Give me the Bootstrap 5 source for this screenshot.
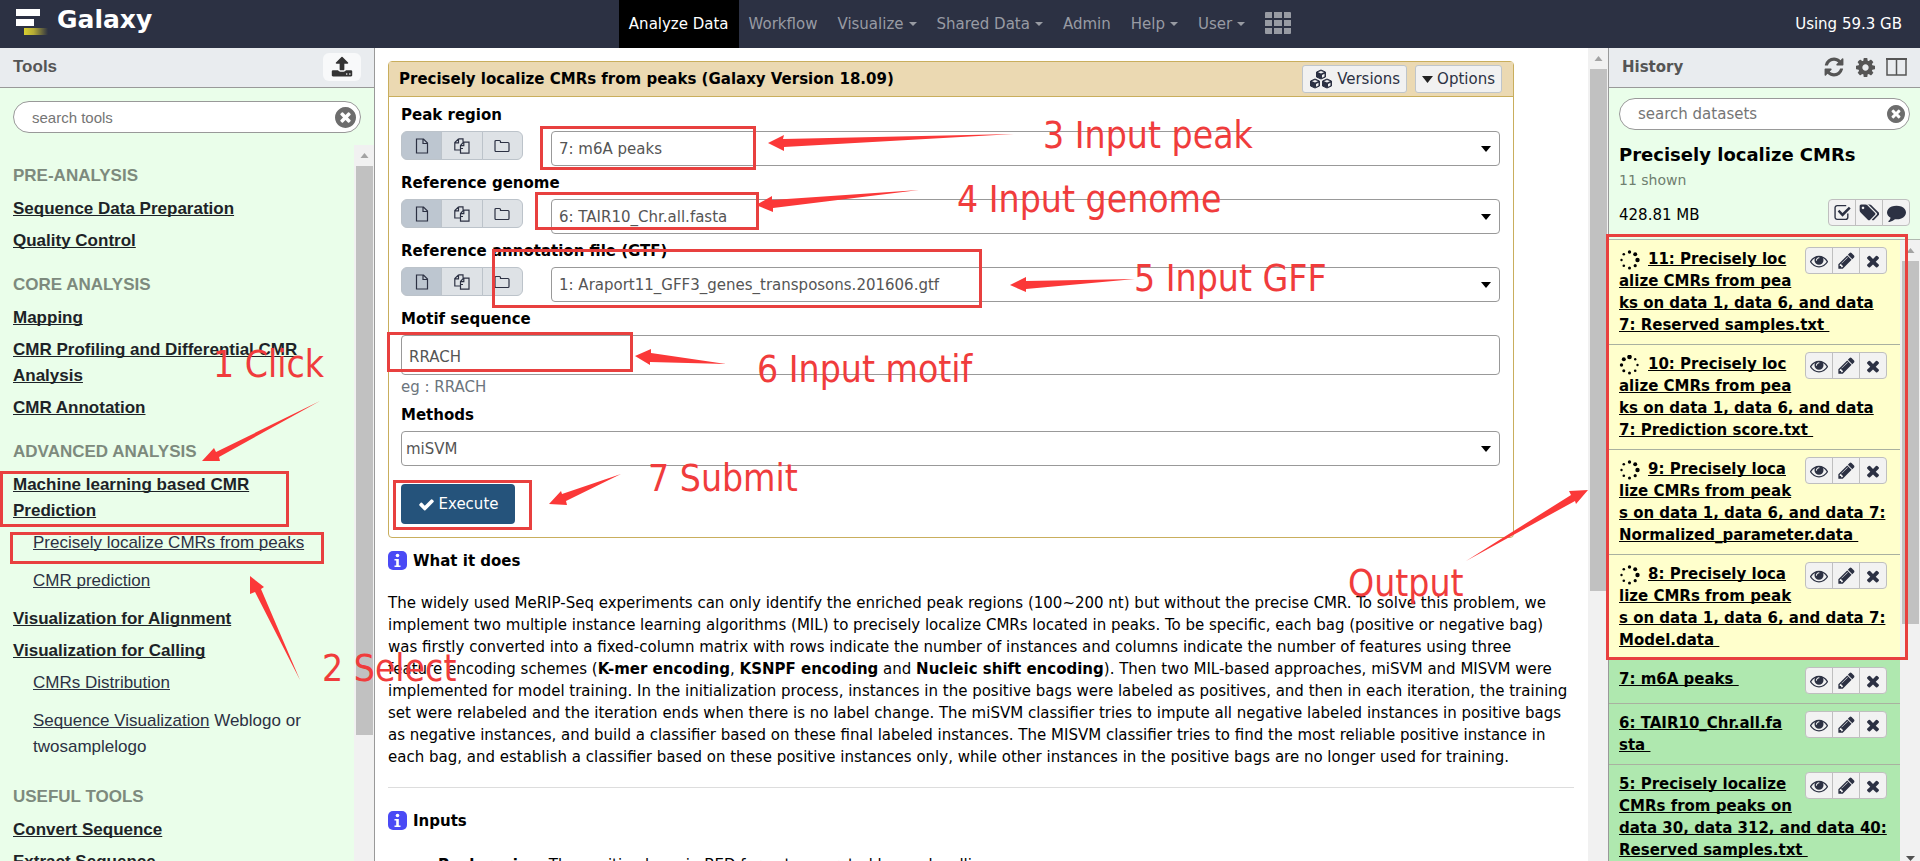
<!DOCTYPE html>
<html lang="en">
<head>
<meta charset="utf-8">
<meta name="viewport" content="width=device-width, initial-scale=1">
<title>Galaxy</title>
<link rel="stylesheet" href="https://cdn.jsdelivr.net/npm/bootstrap@5.3.0/dist/css/bootstrap.min.css">
<style>
  body { font: 15px/22px Verdana, "DejaVu Sans", sans-serif; color: #000; }
  a { color: inherit; text-decoration-skip-ink: none; }
  .masthead { height: 48px; background: #2c3143; color: #fff; }
  .brand-name { font-size: 25px; line-height: 40px; padding-left: 7px; }
  .main-nav { margin-left: 18px; }
  .masthead .nav-link { color: #989ba3; padding: 0 10px; line-height: 48px; height: 48px; }
  .masthead .nav-link.active { background: #000; color: #fff; }
  .masthead .nav-link svg { margin-top: -4px; }
  .masthead .dropdown-toggle::after { margin-left: 5px; vertical-align: 3px; border-width: 4px 4px 0; }
  .usage { line-height: 48px; padding-right: 18px; }
  .tools-panel { width: 375px; background: #eafeea; border-right: 1px solid #999; font-family: "Liberation Sans", Arial, sans-serif; font-size: 17px; line-height: 26px; color: #2c3143; }
  .history-panel { width: 312px; background: #eafeea; border-left: 1px solid #999; }
  .panel-head { height: 40px; background: #e9ecef; border-bottom: 1px solid #999; color: #555; padding: 0 13px 2px; }
  .panel-head .btn { color: #333; border: 0; }
  .head-icons { gap: 11px; }
  .upload-btn { background: #f8f9fa; width: 38px; height: 28px; padding: 2px; }
  .search-box { border: 1px solid #999; border-radius: 16px; height: 32px; background: #fff; }
  .tools-search { margin: 13px 13px 12px; }
  .search-box input { border: 0; background: none; outline: 0; height: 30px; min-width: 0; }
  .search-box input::placeholder { color: #757575; opacity: 1; }
  .search-box button { border: 0; background: none; padding: 0; color: #6d6d6d; line-height: 0; }
  .tool-list { padding: 18px 8px 0 13px; }
  .tool-list h2 { font-size: 17px; line-height: 26px; font-weight: bold; color: #7d8a7d; margin: 12px 0 7px; }
  .tool-list h2:first-child { margin-top: 0; }
  .tool-cat { font-weight: bold; margin-bottom: 6px; color: #1d2327; }
  .tool-item { margin: 0 0 12px 20px; }
  .track { width: 20px; background: #f1f1f1; color: #a3a3a3; }
  .track .cap { height: 21px; line-height: 0; }
  .thumb { width: 17px; background: #c1c1c1; }
  .center-body { padding: 13px 14px 0 13px; }
  .tool-card { border: 1px solid #c9ae5d; border-radius: 4px; margin-right: 60px; height: 477px; }
  .tool-head { background: #ebd9b2; border-bottom: 1px solid #c9ae5d; height: 35px; padding: 0 11px 0 10px; }
  .tool-head .btn { background: #f1f1f1; border: 1px solid #bfc5ca; border-radius: 3px; height: 28px; padding: 0 6px; font-size: 15px; line-height: 24px; color: #2c3143; }
  .tool-form { padding: 7px 13px 0 12px; }
  .tool-form label { font-weight: bold; display: block; line-height: 22px; margin-bottom: 5px; }
  .src-group { width: 122px; margin-right: 28px; height: 29px; }
  .src-group .btn { background: #dee2e6; border-color: #bcc3ca; color: #2c3143; padding: 0; line-height: 0; }
  .src-group .btn.active { background: #bdc6d0; border-color: #bcc3ca; }
  .field { border: 1px solid #999; border-radius: 4px; height: 35px; width: 100%; padding: 0 7px; color: #555; background: #fff; font-size: 15px; }
  .field-row { margin-bottom: 6px; }
  select.field { appearance: none; background: #fff url("data:image/svg+xml,%3Csvg xmlns='http://www.w3.org/2000/svg' width='10' height='6'%3E%3Cpath d='M0 0h10L5 6z'/%3E%3C/svg%3E") no-repeat right 8px center; }
  select#method { padding-left: 4px; }
  .motif { height: 40px; padding-top: 3px; }
  .hint { color: #6c757d; line-height: 22px; margin: 1px 0 6px; }
  .run-btn { background: #25537b; color: #fff; border: 0; border-radius: 4px; width: 114px; height: 40px; font-size: 15px; padding: 0; margin-top: 18px; }
  .help h3 { font-size: 15px; line-height: 22px; font-weight: bold; margin: 12px 0 20px; gap: 5px; }
  .help p { margin: 0; }
  .help hr { margin: 19px 0 22px; border-color: #ddd; opacity: 1; }
  .help ul { list-style: none; padding: 2px 0 0 50px; margin: 0; }
  .hist-top { padding: 10px 10px 0 10px; height: 151px; }
  .hist-name { font-size: 18px; line-height: 24px; font-weight: bold; margin: 13px 0 2px; }
  .hist-shown { font-size: 14px; color: #6f7f6f; line-height: 22px; }
  .hist-list { border-top: 1px solid #b0b8b0; }
  .hist-item { padding: 8px 13px 8px 10px; border-bottom: 1px solid #a9b1a0; font-weight: bold; min-height: 44px; line-height: 22px; white-space: nowrap; }
  .hist-item .btn-group { float: right; margin: -1px 0 4px 4px; }
  .running { background: #ffffcc; }
  .done { background: #afe8af; }
  .mini .btn { width: 28px; height: 27px; padding: 0; line-height: 0; background: #f2f2f2; border: 1px solid #bfbfbf; color: #2c3143; border-radius: 4px; }
  .notes { left: 0; top: 0; pointer-events: none; z-index: 5; font-family: Tahoma, "DejaVu Sans Condensed", "Noto Sans", sans-serif; font-size: 37px; }
</style>
</head>
<body class="vh-100 d-flex flex-column overflow-hidden position-relative">

<svg width="0" height="0" class="position-absolute" aria-hidden="true">
  <symbol id="i-cog" viewBox="0 128 1536 1536"><path d="M1024 896q0-106-75-181t-181-75-181 75-75 181 75 181 181 75 181-75 75-181zm512-109v222q0 12-8 23t-20 13l-185 28q-19 54-39 91 35 50 107 138 10 12 10 25t-9 23q-27 37-99 108t-94 71q-12 0-26-9l-138-108q-44 23-91 38-16 136-29 186-7 28-36 28h-222q-14 0-24.500-8.500t-11.500-21.500l-28-184q-49-16-90-37l-141 107q-10 9-25 9-14 0-25-11-126-114-165-168-7-10-7-23 0-12 8-23 15-21 51-66.500t54-70.500q-27-50-41-99l-183-27q-13-2-21-12.500t-8-23.500v-222q0-12 8-23t19-13l186-28q14-46 39-92-40-57-107-138-10-12-10-24 0-10 9-23 26-36 98.500-107.500t94.500-71.500q13 0 26 10l138 107q44-23 91-38 16-136 29-186 7-28 36-28h222q14 0 24.500 8.500t11.500 21.500l28 184q49 16 90 37l142-107q9-9 24-9 13 0 25 10 129 119 165 170 7 8 7 22 0 12-8 23-15 21-51 66.500t-54 70.500q26 50 41 98l183 28q13 2 21 12.500t8 23.500z"/></symbol>
  <symbol id="i-x" viewBox="0 0 1792 1792"><path d="M1490 1322q0 40-28 68l-136 136q-28 28-68 28t-68-28l-294-294-294 294q-28 28-68 28t-68-28l-136-136q-28-28-28-68t28-68l294-294-294-294q-28-28-28-68t28-68l136-136q28-28 68-28t68 28l294 294 294-294q28-28 68-28t68 28l136 136q28 28 28 68t-28 68l-294 294 294 294q28 28 28 68z"/></symbol>
  <symbol id="i-refresh" viewBox="0 0 1792 1792"><path d="M1639 1056q0 5-1 7-64 268-268 434.500t-478 166.500q-146 0-282.500-55t-243.500-157l-129 129q-19 19-45 19t-45-19-19-45v-448q0-26 19-45t45-19h448q26 0 45 19t19 45-19 45l-137 137q71 66 161 102t187 36q134 0 250-65t186-179q11-17 53-117 8-23 30-23h192q13 0 22.500 9.500t9.500 22.500zm25-800v448q0 26-19 45t-45 19h-448q-26 0-45-19t-19-45 19-45l138-138q-148-137-349-137-134 0-250 65t-186 179q-11 17-53 117-8 23-30 23h-199q-13 0-22.500-9.500t-9.500-22.500v-7q65-268 270-434.500t480-166.500q146 0 284 55.500t245 156.500l130-129q19-19 45-19t45 19 19 45z"/></symbol>
  <symbol id="i-eye" viewBox="0 0 1792 1792"><path d="M1664 960q-152-236-381-353 61 104 61 225 0 185-131.500 316.500t-316.500 131.500-316.500-131.500-131.500-316.500q0-121 61-225-229 117-381 353 133 205 333.500 326.500t434.500 121.500 434.500-121.500 333.500-326.500zm-720-384q0-20-14-34t-34-14q-125 0-214.500 89.500t-89.500 214.500q0 20 14 34t34 14 34-14 14-34q0-86 61-147t147-61q20 0 34-14t14-34zm848 384q0 34-20 69-140 230-376.500 368.500t-499.500 138.500-499.500-139-376.500-368q-20-35-20-69t20-69q140-229 376.500-368t499.500-139 499.500 139 376.500 368q20 35 20 69z"/></symbol>
  <symbol id="i-pencil" viewBox="0 0 1792 1792"><path d="M491 1536l91-91-235-235-91 91v107h128v128h107zm523-928q0-22-22-22-10 0-17 7l-542 542q-7 7-7 17 0 22 22 22 10 0 17-7l542-542q7-7 7-17zm-54-192l416 416-832 832h-416v-416zm683 96q0 53-37 90l-166 166-416-416 166-165q36-38 90-38 53 0 91 38l235 234q37 39 37 91z"/></symbol>
  <symbol id="i-upload" viewBox="0 0 1792 1792"><path d="M1344 1472q0-26-19-45t-45-19-45 19-19 45 19 45 45 19 45-19 19-45zm256 0q0-26-19-45t-45-19-45 19-19 45 19 45 45 19 45-19 19-45zm128-224v320q0 40-28 68t-68 28h-1472q-40 0-68-28t-28-68v-320q0-40 28-68t68-28h427q21 56 70.500 92t110.500 36h256q61 0 110.500-36t70.500-92h427q40 0 68 28t28 68zm-325-648q-17 40-59 40h-256v448q0 26-19 45t-45 19h-256q-26 0-45-19t-19-45v-448h-256q-42 0-59-40-17-39 14-69l448-448q18-19 45-19t45 19l448 448q31 30 14 69z"/></symbol>
  <symbol id="i-clear" viewBox="128 128 1536 1536"><path d="M1277 1122q0-26-19-45l-181-181 181-181q19-19 19-45 0-27-19-46l-90-90q-19-19-46-19-26 0-45 19l-181 181-181-181q-19-19-45-19-27 0-46 19l-90 90q-19 19-19 46 0 26 19 45l181 181-181 181q-19 19-19 45 0 27 19 46l90 90q19 19 46 19 26 0 45-19l181-181 181 181q19 19 45 19 27 0 46-19l90-90q19-19 19-46zm387-226q0 209-103 385.500t-279.500 279.500-385.500 103-385.500-103-279.500-279.500-103-385.500 103-385.500 279.500-279.500 385.500-103 385.500 103 279.500 279.500 103 385.500z"/></symbol>
  <symbol id="i-check" viewBox="0 0 1792 1792"><path d="M1671 566q0 40-28 68l-724 724-136 136q-28 28-68 28t-68-28l-136-136-362-362q-28-28-28-68t28-68l136-136q28-28 68-28t68 28l294 295 656-657q28-28 68-28t68 28l136 136q28 28 28 68z"/></symbol>
  <symbol id="i-tags" viewBox="0 0 1920 1792"><path d="M512 448q0-53-37.500-90.500t-90.500-37.500-90.500 37.500-37.500 90.500 37.500 90.500 90.500 37.500 90.500-37.500 37.500-90.500zm1067 576q0 53-37 90l-491 492q-39 37-91 37-53 0-90-37l-715-716q-38-37-64.500-101t-26.500-117v-416q0-52 38-90t90-38h416q53 0 117 26.500t102 64.500l715 714q37 39 37 91zm384 0q0 53-37 90l-491 492q-39 37-91 37-36 0-59-14t-53-45l470-470q37-37 37-90 0-52-37-91l-715-714q-38-38-102-64.500t-117-26.500h224q53 0 117 26.500t102 64.500l715 714q37 39 37 91z"/></symbol>
  <symbol id="i-comment" viewBox="0 0 1792 1792"><path d="M1792 896q0 174-120 321.500t-326 233-450 85.500q-70 0-145-8-198 175-460 242-49 14-114 22-17 2-30.500-9t-17.500-29v-1q-3-4-.5-12t2-10 4.500-9.500l6-9 7-8.500 8-9q7-8 31-34.500t34.500-38 31-39.500 32.500-51 27-59 26-76q-157-89-247.500-220t-90.500-281q0-174 120-321.500t326-233 450-85.500 450 85.500 326 233 120 321.500z"/></symbol>
  <symbol id="i-checkbox" viewBox="0 0 16 16"><path d="M13 9v3.500a2 2 0 0 1-2 2H3a2 2 0 0 1-2-2v-9a2 2 0 0 1 2-2h8.500" fill="none" stroke="currentColor" stroke-width="1.300"/><path d="M3.500 7l1.500-1.500 3 3L14 2.500 15.700 4.200 8 12z"/></symbol>
  <symbol id="i-file" viewBox="0 0 16 16"><path d="M2.500 1h7l4 4v10h-11zM9 1v4.500h4.500" fill="none" stroke="currentColor" stroke-width="1.200"/></symbol>
  <symbol id="i-files" viewBox="0 0 16 16"><path d="M4.500.8H9v3M4.500.8L.8 4.500V12H6M4.500.8v4H.8M9.500 4.200H15v11H6.500V7.500zM9.800 4.200v3.500H6.500M9 10.500H6.500" fill="none" stroke="currentColor" stroke-width="1.200"/></symbol>
  <symbol id="i-folder" viewBox="0 0 16 16"><path d="M1 3.500a1 1 0 0 1 1-1h3.500a1 1 0 0 1 1 1v1H14a1 1 0 0 1 1 1v7a1 1 0 0 1-1 1H2a1 1 0 0 1-1-1z" fill="none" stroke="currentColor" stroke-width="1.200"/></symbol>
  <symbol id="i-cubes" viewBox="0 0 24 20"><g fill="currentColor" stroke="currentColor" stroke-linejoin="round"><path d="M12 1l4.500 2v5L12 10 7.500 8V3zM6 10l4.500 2v5L6 19l-4.500-2v-5zM18 10l4.500 2v5L18 19l-4.500-2v-5z"/></g><path d="M12 2l3 1.300-3 1.300-3-1.300zM6 11l3 1.300-3 1.300-3-1.300zM18 11l3 1.300-3 1.300-3-1.300zM13 6l2.500-1.200v2.700L13 8.700zM7 15l2.500-1.200v2.700L7 17.700zM19 15l2.500-1.200v2.700L19 17.700z" fill="#f1f1f1"/></symbol>
  <symbol id="i-columns" viewBox="0 0 21 18"><path d="M1 1h19v16H1zM10.500 2v15" fill="none" stroke="currentColor" stroke-width="1.500"/><path d="M0 0h21v2H0z"/></symbol>
  <symbol id="i-info" viewBox="0 0 20 20"><rect width="19" height="19" rx="5" fill="#4a4af5"/><circle cx="9.500" cy="4.500" r="1.800" fill="#fff"/><path d="M6.500 8h4.300v6.500h1.700V16h-6v-1.500h1.700v-5H6.500z" fill="#fff"/></symbol>
  <symbol id="i-up" viewBox="0 0 8 5"><path d="M0 5h8L4 0z"/></symbol>
  <symbol id="i-spin" viewBox="0 0 20 20"><circle cx="10" cy="2" r="1.700"/><circle cx="15.700" cy="4.300" r="2"/><circle cx="18" cy="10" r="2.200"/><circle cx="15.700" cy="15.700" r="1.600"/><circle cx="10" cy="18" r="1.500"/><circle cx="4.300" cy="15.700" r="1.300"/><circle cx="2" cy="10" r="1.200"/><circle cx="4.300" cy="4.300" r="1.300"/></symbol>
  <symbol id="i-spin2" viewBox="0 0 20 20"><circle cx="10" cy="2" r="2.300"/><circle cx="15.700" cy="4.300" r="1.200"/><circle cx="18" cy="10" r="1.200"/><circle cx="15.700" cy="15.700" r="1.300"/><circle cx="10" cy="18" r="1.500"/><circle cx="4.300" cy="15.700" r="1.500"/><circle cx="2" cy="10" r="1.700"/><circle cx="4.300" cy="4.300" r="2"/></symbol>
</svg>

<header class="masthead d-flex flex-shrink-0">
  <div class="col d-flex align-items-start">
    <svg class="ms-3 mt-2" width="34" height="28" viewBox="0 0 34 28"><defs><linearGradient id="gold"><stop offset="0" stop-color="#d8cf2f"/><stop offset=".4" stop-color="#b5ab35"/><stop offset="1" stop-color="#2c3143"/></linearGradient></defs><path d="M0 1h24v7H0zM0 11h18v7H0z" fill="#fff"/><path d="M8 20h24v7H8z" fill="url(#gold)"/></svg>
    <span class="brand-name fw-bold">Galaxy</span>
  </div>
  <nav class="nav main-nav flex-nowrap">
    <a class="nav-link active" href="#">Analyze Data</a>
    <a class="nav-link" href="#">Workflow</a>
    <a class="nav-link dropdown-toggle" href="#">Visualize</a>
    <a class="nav-link dropdown-toggle" href="#">Shared Data</a>
    <a class="nav-link" href="#">Admin</a>
    <a class="nav-link dropdown-toggle" href="#">Help</a>
    <a class="nav-link dropdown-toggle" href="#">User</a>
    <a class="nav-link" href="#" aria-label="Apps"><svg width="26" height="22" viewBox="0 0 26 22" fill="currentColor"><path d="M0 1q0-1 1-1h6v6H0zM9 0h8v6H9zM19 0h6q1 0 1 1v5h-7zM0 8h7v6H0zM9 8h8v6H9zM19 8h7v6h-7zM0 16h7v6H1q-1 0-1-1zM9 16h8v6H9zM19 16h7v5q0 1-1 1h-6z"/></svg></a>
  </nav>
  <div class="col text-end usage">Using 59.3 GB</div>
</header>

<div class="d-flex flex-grow-1 overflow-hidden">
  <aside class="tools-panel flex-shrink-0 d-flex flex-column">
    <div class="panel-head flex-shrink-0 d-flex align-items-center justify-content-between">
      <span class="fw-bold">Tools</span>
      <button class="btn upload-btn" aria-label="Upload"><svg width="22" height="22" fill="currentColor"><use href="#i-upload"/></svg></button>
    </div>
    <div class="search-box tools-search d-flex align-items-center flex-shrink-0 ps-3 pe-1">
      <input class="flex-grow-1" style="font-size:15px" type="text" placeholder="search tools" aria-label="search tools">
      <button aria-label="Clear"><svg width="21" height="21" fill="currentColor"><use href="#i-clear"/></svg></button>
    </div>
    <div class="d-flex flex-grow-1 overflow-hidden">
      <div class="tool-list flex-grow-1 d-flex flex-column">
        <h2>PRE-ANALYSIS</h2>
        <div class="tool-cat"><a href="#">Sequence Data Preparation</a></div>
        <div class="tool-cat"><a href="#">Quality Control</a></div>
        <h2>CORE ANALYSIS</h2>
        <div class="tool-cat"><a href="#">Mapping</a></div>
        <div class="tool-cat"><a href="#">CMR Profiling and Differential CMR Analysis</a></div>
        <div class="tool-cat"><a href="#">CMR Annotation</a></div>
        <h2>ADVANCED ANALYSIS</h2>
        <div class="tool-cat"><a href="#">Machine learning based CMR<br>Prediction</a></div>
        <div class="tool-item"><a href="#">Precisely localize CMRs from peaks</a></div>
        <div class="tool-item"><a href="#">CMR prediction</a></div>
        <div class="tool-cat"><a href="#">Visualization for Alignment</a></div>
        <div class="tool-cat"><a href="#">Visualization for Calling</a></div>
        <div class="tool-item"><a href="#">CMRs Distribution</a></div>
        <div class="tool-item"><a href="#">Sequence Visualization</a> Weblogo or twosamplelogo</div>
        <h2>USEFUL TOOLS</h2>
        <div class="tool-cat"><a href="#">Convert Sequence</a></div>
        <div class="tool-cat"><a href="#">Extract Sequence</a></div>
      </div>
      <div class="track flex-shrink-0 d-flex flex-column align-items-center">
        <div class="cap d-flex align-items-center"><svg width="9" height="5" fill="currentColor"><use href="#i-up"/></svg></div>
        <div class="thumb" style="height:79.5%"></div>
      </div>
    </div>
  </aside>

  <main class="flex-grow-1 d-flex overflow-hidden bg-white">
    <div class="center-body flex-grow-1">
      <div class="tool-card">
        <div class="tool-head d-flex align-items-center">
          <span class="fw-bold me-auto">Precisely localize CMRs from peaks (Galaxy Version 18.09)</span>
          <button class="btn d-flex align-items-center gap-1 me-2"><svg width="24" height="20"><use href="#i-cubes"/></svg>Versions</button>
          <button class="btn d-flex align-items-center gap-1"><svg width="11" height="7"><path d="M0 0h11L5.500 7z" fill="#222"/></svg>Options</button>
        </div>
        <form class="tool-form" onsubmit="return false">
          <label for="peak">Peak region</label>
          <div class="d-flex field-row">
            <div class="btn-group src-group flex-shrink-0">
              <button class="btn active" aria-label="Single dataset"><svg width="16" height="16"><use href="#i-file"/></svg></button><button class="btn" aria-label="Multiple datasets"><svg width="16" height="16"><use href="#i-files"/></svg></button><button class="btn" aria-label="Dataset collection"><svg width="16" height="16"><use href="#i-folder"/></svg></button>
            </div>
            <select class="field" id="peak"><option>7: m6A peaks</option></select>
          </div>
          <label for="genome">Reference genome</label>
          <div class="d-flex field-row">
            <div class="btn-group src-group flex-shrink-0">
              <button class="btn active" aria-label="Single dataset"><svg width="16" height="16"><use href="#i-file"/></svg></button><button class="btn" aria-label="Multiple datasets"><svg width="16" height="16"><use href="#i-files"/></svg></button><button class="btn" aria-label="Dataset collection"><svg width="16" height="16"><use href="#i-folder"/></svg></button>
            </div>
            <select class="field" id="genome"><option>6: TAIR10_Chr.all.fasta</option></select>
          </div>
          <label for="gtf">Reference annotation file (GTF)</label>
          <div class="d-flex field-row">
            <div class="btn-group src-group flex-shrink-0">
              <button class="btn active" aria-label="Single dataset"><svg width="16" height="16"><use href="#i-file"/></svg></button><button class="btn" aria-label="Multiple datasets"><svg width="16" height="16"><use href="#i-files"/></svg></button><button class="btn" aria-label="Dataset collection"><svg width="16" height="16"><use href="#i-folder"/></svg></button>
            </div>
            <select class="field" id="gtf"><option>1: Araport11_GFF3_genes_transposons.201606.gtf</option></select>
          </div>
          <label for="motif">Motif sequence</label>
          <input class="field motif" id="motif" type="text" value="RRACH">
          <div class="hint">eg : RRACH</div>
          <label for="method">Methods</label>
          <select class="field" id="method"><option>miSVM</option></select>
          <button class="run-btn d-flex align-items-center justify-content-center"><svg class="me-1" width="17" height="17" fill="currentColor"><use href="#i-check"/></svg>Execute</button>
        </form>
      </div>
      <div class="help">
        <h3 class="d-flex align-items-center"><svg width="20" height="20"><use href="#i-info"/></svg>What it does</h3>
        <p>The widely used MeRIP-Seq experiments can only identify the enriched peak regions (100~200 nt) but without the precise CMR. To solve this problem, we implement two multiple instance learning algorithms (MIL) to precisely localize CMRs located in peaks. To be specific, each bag (positive or negative bag) was firstly converted into a fixed-column matrix with rows indicate the number of instances and columns indicate the number of features using three<br>feature encoding schemes (<b>K-mer encoding</b>, <b>KSNPF encoding</b> and <b>Nucleic shift encoding</b>). Then two MIL-based approaches, miSVM and MISVM were implemented for model training. In the initialization process, instances in the positive bags were labeled as positives, and then in each iteration, the training set were relabeled and the iteration ends when there is no label change. The miSVM classifier tries to impute all negative labeled instances in positive bags as negative instances, and build a classifier based on these final labeled instances. The MISVM classifier tries to find the most reliable positive instance in each bag, and establish a classifier based on these positive instances only, while other instances in the positive bags are no longer used for training.</p>
        <hr>
        <h3 class="d-flex align-items-center"><svg width="20" height="20"><use href="#i-info"/></svg>Inputs</h3>
        <ul><li><b>Peak region</b>: The positive bags in BED format generated by peak calling</li></ul>
      </div>
    </div>
    <div class="track flex-shrink-0 d-flex flex-column align-items-center">
      <div class="cap d-flex align-items-center"><svg width="9" height="5" fill="currentColor"><use href="#i-up"/></svg></div>
      <div class="thumb" style="height:64.2%"></div>
    </div>
  </main>

  <aside class="history-panel flex-shrink-0 d-flex flex-column">
    <div class="panel-head head-icons flex-shrink-0 d-flex align-items-center">
      <span class="fw-bold me-auto">History</span>
      <a href="#" aria-label="Refresh"><svg width="22" height="22" fill="currentColor"><use href="#i-refresh"/></svg></a>
      <a href="#" aria-label="History options"><svg width="19" height="19" fill="currentColor"><use href="#i-cog"/></svg></a>
      <a href="#" aria-label="Columns"><svg width="21" height="18" fill="currentColor"><use href="#i-columns"/></svg></a>
    </div>
    <div class="hist-top flex-shrink-0">
      <div class="search-box d-flex align-items-center ps-3 pe-1">
        <input class="flex-grow-1" type="text" placeholder="search datasets" aria-label="search datasets">
        <button aria-label="Clear"><svg width="18" height="18" fill="currentColor"><use href="#i-clear"/></svg></button>
      </div>
      <div class="hist-name">Precisely localize CMRs</div>
      <div class="hist-shown">11 shown</div>
      <div class="d-flex justify-content-between align-items-end mt-2">
        <span>428.81 MB</span>
        <div class="btn-group mini">
          <button class="btn" aria-label="Select"><svg width="17" height="17" fill="currentColor"><use href="#i-checkbox"/></svg></button><button class="btn" aria-label="Tags"><svg width="20" height="19" fill="currentColor"><use href="#i-tags"/></svg></button><button class="btn" aria-label="Annotate"><svg width="19" height="19" fill="currentColor"><use href="#i-comment"/></svg></button>
        </div>
      </div>
    </div>
    <div class="hist-list d-flex flex-grow-1 overflow-hidden">
      <div class="flex-grow-1" id="datasets"></div>
      <div class="track flex-shrink-0 d-flex flex-column align-items-center">
        <div class="cap d-flex align-items-center"><svg width="9" height="5" fill="currentColor"><use href="#i-up"/></svg></div>
        <div class="thumb" style="height:58.5%"></div>
        <div class="cap mt-auto d-flex align-items-end"><svg width="9" height="5"><path d="M0 0h9L4.500 5z" fill="#505050"/></svg></div>
      </div>
    </div>
  </aside>
</div>

<svg class="notes position-absolute" width="1920" height="861">
  <g fill="none" stroke="#e8403f" stroke-width="3">
    <path d="M1.500 472.500h286v53h-286zM11.500 533.500h311v29h-311z"/>
    <path d="M541.500 127.500h213v41h-213zM536.500 193.500h221v35h-221zM493.500 250.500h487v56h-487zM388.500 333.500h243v37h-243z"/>
    <path d="M394.500 481.500h136v47h-136zM1607.500 235.500h299v423h-299z"/>
  </g>
  <g fill="#fb3838">
    <path d="M202 461L214 448 216 452 320 401 219 457 220 461z"/>
    <path d="M250 576V594L255 592 300 680 261 589 264 587z"/>
    <path d="M768 143L784 135 783 139 1014 134 784 147 784 151z"/>
    <path d="M756 205L772 196 772 200 919 190 773 208 773 212z"/>
    <path d="M1010 285L1026 277 1026 281 1135 279 1026 289 1026 292z"/>
    <path d="M635 356L651 349 651 353 726 364 650 362 650 365z"/>
    <path d="M549 504L561 491 562 494 621 474 566 501 567 505z"/>
    <path d="M1588 490L1569 491 1571 495 1466 561 1575 501 1576 504z"/>
  </g>
  <g fill="#f03c3c">
    <text x="213" y="377">1 Click</text>
    <text x="322" y="681">2 Select</text>
    <text x="1043" y="148">3 Input peak</text>
    <text x="957" y="212">4 Input genome</text>
    <text x="1134" y="291">5 Input GFF</text>
    <text x="757" y="382">6 Input motif</text>
    <text x="648" y="491">7 Submit</text>
    <text x="1348" y="596">Output</text>
  </g>
</svg>

<script>
  const icon = (id, w) => `<svg width="${w}" height="${w}" fill="currentColor"><use href="#i-${id}"/></svg>`;
  const items = [
    ["running", "11: Precisely loc<br>alize CMRs from pea<br>ks on data 1, data 6, and data<br>7: Reserved samples.txt&nbsp;", "spin"],
    ["running", "10: Precisely loc<br>alize CMRs from pea<br>ks on data 1, data 6, and data<br>7: Prediction score.txt&nbsp;", "spin2"],
    ["running", "9: Precisely loca<br>lize CMRs from peak<br>s on data 1, data 6, and data 7:<br>Normalized_parameter.data&nbsp;", "spin"],
    ["running", "8: Precisely loca<br>lize CMRs from peak<br>s on data 1, data 6, and data 7:<br>Model.data&nbsp;", "spin"],
    ["done", "7: m6A peaks&nbsp;"],
    ["done", "6: TAIR10_Chr.all.fa<br>sta&nbsp;"],
    ["done", "5: Precisely localize<br>CMRs from peaks on<br>data 30, data 312, and data 40:<br>Reserved samples.txt&nbsp;"]
  ];
  document.getElementById("datasets").innerHTML = items.map(([state, name, spinner]) => `
    <div class="hist-item ${state}">
      <div class="btn-group mini"><button class="btn" aria-label="View">${icon("eye", 18)}</button><button class="btn" aria-label="Edit">${icon("pencil", 19)}</button><button class="btn" aria-label="Delete">${icon("x", 18)}</button></div>
      ${spinner ? `<svg class="me-2" width="21" height="20"><use href="#i-${spinner}"/></svg>` : ""}<a href="#">${name}</a>
    </div>`).join("");
</script>
<script src="https://cdn.jsdelivr.net/npm/bootstrap@5.3.0/dist/js/bootstrap.bundle.min.js"></script>
</body>
</html>
